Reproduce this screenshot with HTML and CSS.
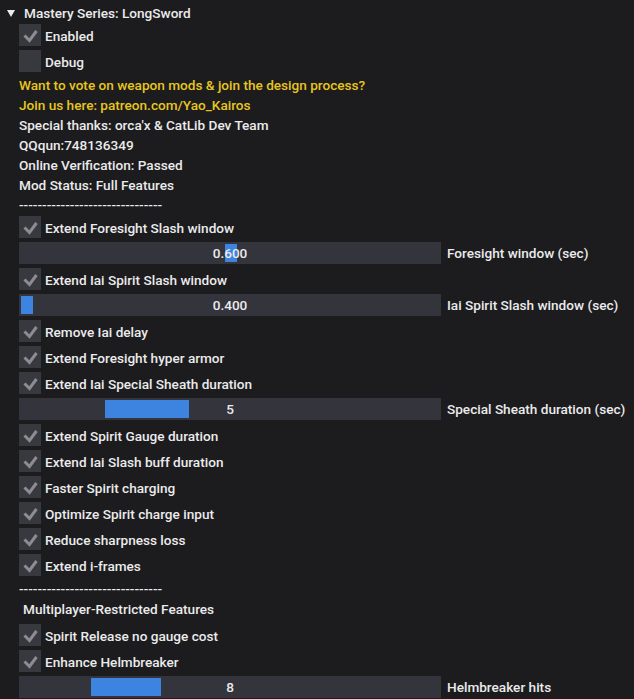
FILE: index.html
```html
<!DOCTYPE html>
<html lang="en">
<head>
    <meta charset="UTF-8">
    <meta name="viewport" content="width=device-width, initial-scale=1.0">
    <title>Mastery Series: LongSword</title>
    <link rel="stylesheet" href="styles.css">
</head>
<body>
    <div class="header">
        <span class="arrow"></span>
        <span>Mastery Series: LongSword</span>
    </div>
    <div class="panel">
        <label class="check on"><span class="box"><svg viewBox="0 0 22 22"><polyline points="5.5,11.5 10.5,16.5 17.5,7"/></svg></span>Enabled</label>
        <label class="check"><span class="box"></span>Debug</label>
        <div class="line yellow">Want to vote on weapon mods &amp; join the design process?</div>
        <div class="line yellow">Join us here: patreon.com/Yao_Kairos</div>
        <div class="line">Special thanks: orca'x &amp; CatLib Dev Team</div>
        <div class="line">QQqun:748136349</div>
        <div class="line">Online Verification: Passed</div>
        <div class="line">Mod Status: Full Features</div>
        <div class="line">-------------------------------</div>

        <label class="check on"><span class="box"><svg viewBox="0 0 22 22"><polyline points="5.5,11.5 10.5,16.5 17.5,7"/></svg></span>Extend Foresight Slash window</label>
        <div class="slider-row">
            <div class="slider"><span class="grab" style="left: 206px; width: 12px;"></span><span class="value">0.600</span></div>
            <span>Foresight window (sec)</span>
        </div>
        <label class="check on"><span class="box"><svg viewBox="0 0 22 22"><polyline points="5.5,11.5 10.5,16.5 17.5,7"/></svg></span>Extend Iai Spirit Slash window</label>
        <div class="slider-row">
            <div class="slider"><span class="grab" style="left: 2px; width: 12px;"></span><span class="value">0.400</span></div>
            <span>Iai Spirit Slash window (sec)</span>
        </div>
        <label class="check on"><span class="box"><svg viewBox="0 0 22 22"><polyline points="5.5,11.5 10.5,16.5 17.5,7"/></svg></span>Remove Iai delay</label>
        <label class="check on"><span class="box"><svg viewBox="0 0 22 22"><polyline points="5.5,11.5 10.5,16.5 17.5,7"/></svg></span>Extend Foresight hyper armor</label>
        <label class="check on"><span class="box"><svg viewBox="0 0 22 22"><polyline points="5.5,11.5 10.5,16.5 17.5,7"/></svg></span>Extend Iai Special Sheath duration</label>
        <div class="slider-row">
            <div class="slider"><span class="grab" style="left: 86px; width: 84px;"></span><span class="value">5</span></div>
            <span>Special Sheath duration (sec)</span>
        </div>
        <label class="check on"><span class="box"><svg viewBox="0 0 22 22"><polyline points="5.5,11.5 10.5,16.5 17.5,7"/></svg></span>Extend Spirit Gauge duration</label>
        <label class="check on"><span class="box"><svg viewBox="0 0 22 22"><polyline points="5.5,11.5 10.5,16.5 17.5,7"/></svg></span>Extend Iai Slash buff duration</label>
        <label class="check on"><span class="box"><svg viewBox="0 0 22 22"><polyline points="5.5,11.5 10.5,16.5 17.5,7"/></svg></span>Faster Spirit charging</label>
        <label class="check on"><span class="box"><svg viewBox="0 0 22 22"><polyline points="5.5,11.5 10.5,16.5 17.5,7"/></svg></span>Optimize Spirit charge input</label>
        <label class="check on"><span class="box"><svg viewBox="0 0 22 22"><polyline points="5.5,11.5 10.5,16.5 17.5,7"/></svg></span>Reduce sharpness loss</label>
        <label class="check on"><span class="box"><svg viewBox="0 0 22 22"><polyline points="5.5,11.5 10.5,16.5 17.5,7"/></svg></span>Extend i-frames</label>
        <div class="line">-------------------------------</div>
        <div class="line section">Multiplayer-Restricted Features</div>
        <label class="check on"><span class="box"><svg viewBox="0 0 22 22"><polyline points="5.5,11.5 10.5,16.5 17.5,7"/></svg></span>Spirit Release no gauge cost</label>
        <label class="check on"><span class="box"><svg viewBox="0 0 22 22"><polyline points="5.5,11.5 10.5,16.5 17.5,7"/></svg></span>Enhance Helmbreaker</label>
        <div class="slider-row">
            <div class="slider"><span class="grab" style="left: 72px; width: 70px;"></span><span class="value">8</span></div>
            <span>Helmbreaker hits</span>
        </div>
    </div>
</body>
</html>
```

FILE: styles.css
```css
body {
    margin: 0;
    background-color: #1c1c1f;
    color: #ebebeb;
    font-family: Roboto, "Liberation Sans", sans-serif;
    font-size: 13.6px;
    font-weight: 500;
    line-height: 16px;
    overflow: hidden;
}
.header {
    display: flex;
    align-items: center;
    height: 22px;
    margin-top: 2px;
    padding-left: 7px;
    gap: 9px;
}
.arrow {
    width: 0;
    height: 0;
    border-left: 4px solid transparent;
    border-right: 4px solid transparent;
    border-top: 7px solid #ebebeb;
}
.panel {
    display: flex;
    flex-direction: column;
    gap: 4px;
    padding-left: 19px;
}
.line {
    height: 16px;
    padding-top: 1px;
    box-sizing: border-box;
    white-space: nowrap;
}
.yellow {
    color: #e8c61e;
}
.section {
    padding-left: 4px;
    margin-bottom: 4px;
}
.check {
    display: flex;
    align-items: center;
    gap: 4px;
    height: 22px;
    padding-top: 1px;
    box-sizing: border-box;
}
.box {
    width: 22px;
    height: 22px;
    margin-top: -1px;
    background-color: #38383f;
}
.box svg {
    display: block;
    width: 22px;
    height: 22px;
}
.box polyline {
    fill: none;
    stroke: #8c8c92;
    stroke-width: 3;
}
.slider-row {
    display: flex;
    align-items: center;
    gap: 6px;
    height: 22px;
}
.slider {
    position: relative;
    width: 422px;
    height: 22px;
    background-color: #34343c;
    display: flex;
    align-items: center;
    justify-content: center;
}
.grab {
    position: absolute;
    top: 2px;
    bottom: 2px;
    background-color: #3d84e0;
}
.value {
    position: relative;
}
```
